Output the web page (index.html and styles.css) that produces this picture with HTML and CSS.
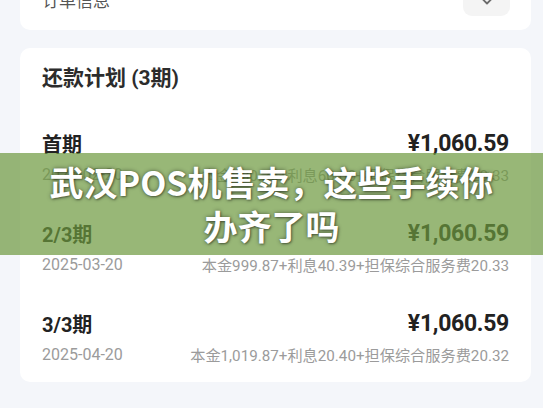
FILE: index.html
```html
<!DOCTYPE html>
<html lang="zh-CN">
<head>
<meta charset="utf-8">
<title>还款计划</title>
<link rel="stylesheet" href="styles.css">
</head>
<body>
<div class="page">
  <section class="card order-card">
    <span class="order-title">订单信息</span>
    <span class="toggle">
      <svg width="14" height="8" viewBox="0 0 14 8"><path d="M1.5 1 L7 6.5 L12.5 1" fill="none" stroke="#6b6b6b" stroke-width="1.8" stroke-linecap="round" stroke-linejoin="round"/></svg>
    </span>
  </section>
  <section class="card plan-card">
    <h2 class="plan-heading">还款计划 (3期)</h2>
    <div class="rows">
      <div class="row">
        <div class="row-line"><span class="term">首期</span><span class="amount">¥1,060.59</span></div>
        <div class="row-line sub"><span>2025-02-20</span><span class="detail">本金980.26+利息60.00+担保综合服务费20.33</span></div>
      </div>
      <div class="row">
        <div class="row-line"><span class="term">2/3期</span><span class="amount">¥1,060.59</span></div>
        <div class="row-line sub"><span>2025-03-20</span><span class="detail">本金999.87+利息40.39+担保综合服务费20.33</span></div>
      </div>
      <div class="row">
        <div class="row-line"><span class="term">3/3期</span><span class="amount">¥1,060.59</span></div>
        <div class="row-line sub"><span>2025-04-20</span><span class="detail">本金1,019.87+利息20.40+担保综合服务费20.32</span></div>
      </div>
    </div>
  </section>
</div>
<div class="banner">
  <h1 class="banner-title">武汉POS机售卖，这些手续你<br>办齐了吗</h1>
</div>
</body>
</html>
```

FILE: styles.css
```css
html, body {
  margin: 0;
  padding: 0;
}
body {
  width: 543px;
  height: 408px;
  overflow: hidden;
  position: relative;
  background: #f4f6fa;
  font-family: Roboto, "Noto Sans CJK SC", sans-serif;
}
.page {
  display: flex;
  flex-direction: column;
  gap: 18px;
  padding: 0 12px 0 20px;
}
.card {
  background: #ffffff;
  border-radius: 10px;
}
.order-card {
  margin-top: -26px;
  height: 56px;
  display: flex;
  align-items: flex-start;
  justify-content: space-between;
  padding: 0 21px 0 22px;
  border-radius: 0 0 10px 10px;
}
.order-title {
  font-size: 17px;
  line-height: 24px;
  color: #555;
  margin-top: 15px;
}
.toggle {
  width: 47px;
  height: 42px;
  border-radius: 9px;
  background: #f4f4f4;
  display: flex;
  align-items: flex-end;
  justify-content: center;
  padding-bottom: 11px;
  box-sizing: border-box;
}
.plan-card {
  padding: 15px 22px 17px 22px;
}
.plan-heading {
  margin: 0;
  font-size: 21px;
  line-height: 30px;
  font-weight: 700;
  color: #2c2c2c;
}
.rows {
  margin-top: 36px;
  display: flex;
  flex-direction: column;
  gap: 34px;
}
.row {
  display: flex;
  flex-direction: column;
  gap: 6px;
}
.row-line {
  display: flex;
  justify-content: space-between;
  align-items: center;
  height: 28px;
}
.term {
  font-size: 20px;
  font-weight: 700;
  color: #222;
}
.amount {
  font-size: 23px;
  font-weight: 700;
  color: #222;
  letter-spacing: -0.3px;
}
.row-line.sub {
  height: 22px;
  font-size: 16px;
  color: #9b9b9b;
}
.detail {
  font-size: 15.2px;
}
.banner {
  position: absolute;
  left: 0;
  right: 0;
  top: 153px;
  height: 102px;
  background: rgba(108, 152, 61, 0.7);
  display: flex;
  align-items: center;
  justify-content: center;
}
.banner-title {
  margin: 0;
  font-family: "Noto Sans CJK SC", sans-serif;
  font-size: 34px;
  line-height: 44px;
  font-weight: 700;
  color: #fff;
  text-align: center;
  text-shadow: 0 0 4px rgba(0, 0, 0, 0.45), 1px 1px 2px rgba(0, 0, 0, 0.35);
}
```
